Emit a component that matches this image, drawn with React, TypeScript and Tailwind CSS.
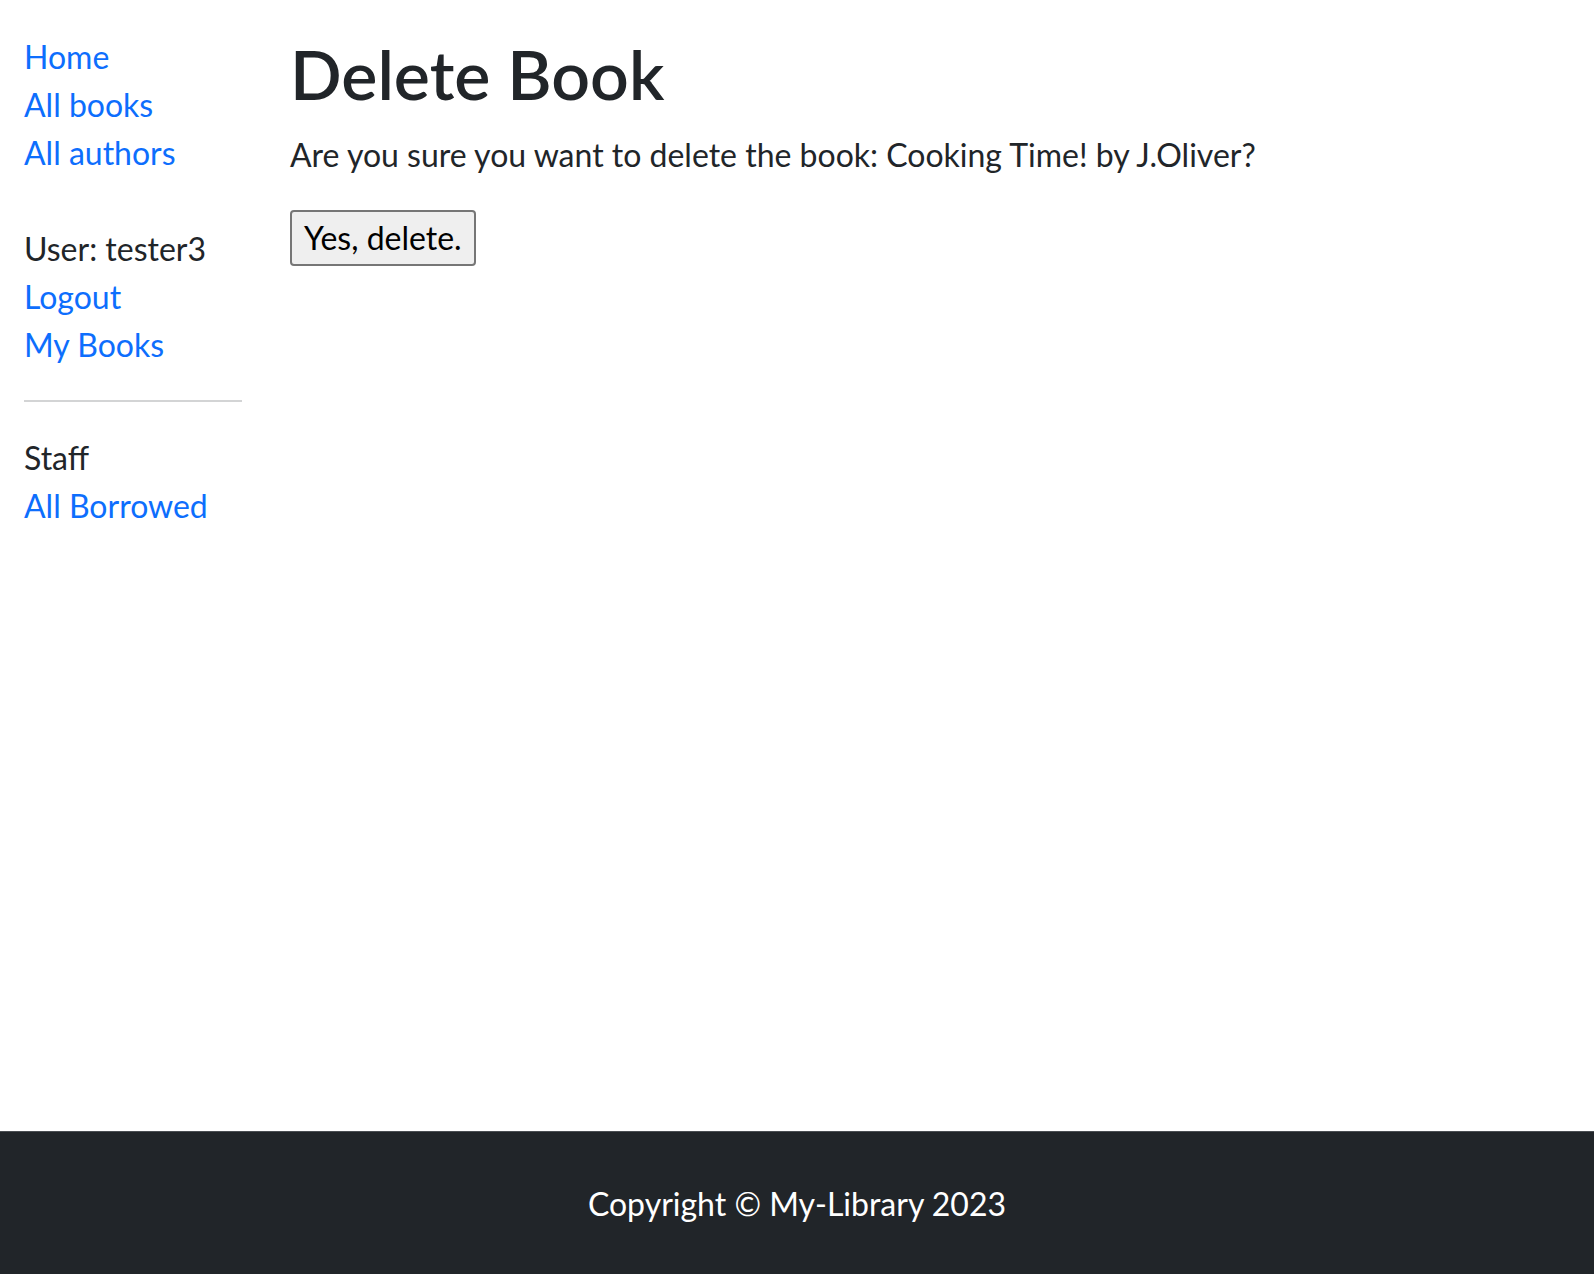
import React from "react";

const link = "text-[#0d6efd] hover:underline";

export default function App() {
  return (
    <div className="min-h-screen flex flex-col bg-white text-[#212529] font-['Lato',sans-serif] text-[32px] leading-[48px]">
      <div className="flex flex-1 px-[24px]">
        <aside className="w-[218px] shrink-0 pt-[33px]">
          <ul className="flex flex-col">
            <li><a href="#" className={link}>Home</a></li>
            <li><a href="#" className={link}>All books</a></li>
            <li><a href="#" className={link}>All authors</a></li>
          </ul>
          <ul className="flex flex-col mt-[48px]">
            <li>User: tester3</li>
            <li><a href="#" className={link}>Logout</a></li>
            <li><a href="#" className={link}>My Books</a></li>
          </ul>
          <hr className="mt-[31px] border-0 h-[2px] bg-[#d3d4d5]" />
          <ul className="flex flex-col mt-[32px]">
            <li>Staff</li>
            <li><a href="#" className={link}>All Borrowed</a></li>
          </ul>
        </aside>
        <main className="flex-1 pl-[48px] pt-[33px]">
          <h1 className="text-[68px] leading-[81.6px] font-semibold mb-[16px]">Delete Book</h1>
          <p className="mb-[31px]">
            Are you sure you want to delete the book: Cooking Time! by J.Oliver?
          </p>
          <button
            type="button"
            className="h-[56px] px-[12px] border-2 border-[#767676] rounded-[4px] bg-[#efefef] text-black text-[32px] leading-[48px]"
          >
            Yes, delete.
          </button>
        </main>
      </div>
      <footer className="h-[143px] bg-[#212529] border-t border-t-[#4a4e52] text-white text-center pt-[48px]">
        Copyright © My-Library 2023
      </footer>
    </div>
  );
}
